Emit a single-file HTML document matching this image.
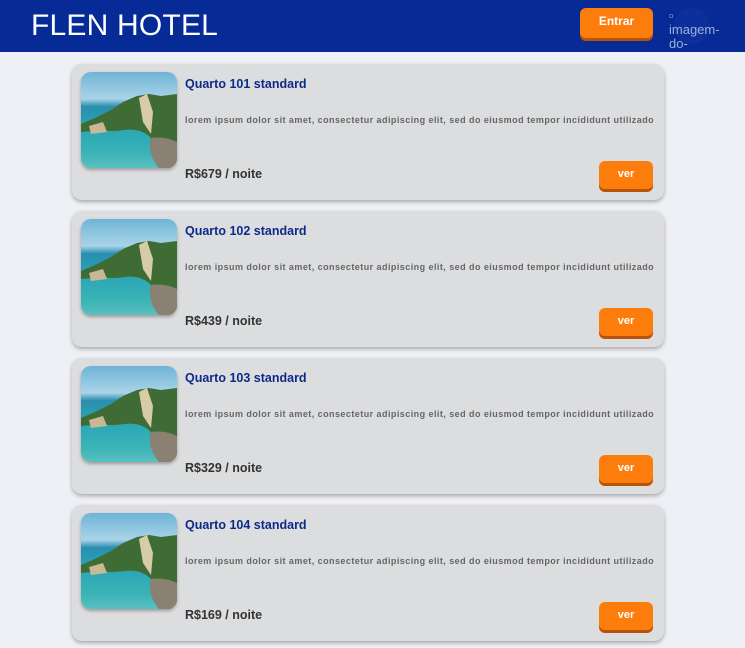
<!DOCTYPE html>
<html><head><meta charset="utf-8"><style>
*{margin:0;padding:0;box-sizing:border-box}
body{width:745px;height:648px;overflow:hidden;background:#eff0f5;font-family:"Liberation Sans",sans-serif;position:relative}
.hdr{position:absolute;left:0;top:0;width:745px;height:52px;background:#062a96}
.logo{position:absolute;left:31px;top:9px;color:#fff;font-size:30px;letter-spacing:0.2px}
.entrar{position:absolute;left:580px;top:8px;width:73px;height:30px;background:#fc7d0b;border-radius:6px;box-shadow:0 3px 0 #b8530a;color:#fff;font-weight:bold;font-size:12px;text-align:center;line-height:26px}
.avc{position:absolute;left:674px;top:8px;width:36px;height:36px;border-radius:50%;background:#0c2f9c}
.av{position:absolute;left:669px;top:9px;color:#9fb0d8;font-size:13px;line-height:14px}
.card{position:absolute;left:72px;width:592px;height:136px;background:#dcdddf;border-radius:10px;box-shadow:0 2px 4px rgba(0,0,0,.3)}
.img{position:absolute;left:9px;top:8px;width:96px;height:96px;border-radius:10px;overflow:hidden;box-shadow:0 2px 3px rgba(0,0,0,.3);
background:linear-gradient(180deg,#6fb4d6 0%,#a9d4e8 28%,#2a8fb0 36%,#2aa7b5 60%,#3bb3b7 85%,#5cc0c0 100%)}
.cliff{position:absolute;left:0;top:0;width:96px;height:96px}
.t{position:absolute;left:113px;top:13px;color:#0d2a8a;font-weight:bold;font-size:12.5px}
.d{position:absolute;left:113px;top:51px;color:#666;font-weight:bold;font-size:9px;letter-spacing:0.45px;white-space:nowrap}
.p{position:absolute;left:113px;top:103px;color:#333;font-weight:bold;font-size:12.5px}
.ver{position:absolute;left:527px;top:97px;width:54px;height:28px;background:#fc7d0b;border-radius:6px;box-shadow:0 3px 0 #b8530a;color:#fff;font-weight:bold;font-size:11px;text-align:center;line-height:26px}
</style></head><body>
<div class="hdr"><div class="logo">FLEN HOTEL</div><div class="entrar">Entrar</div><div class="avc"></div><div class="av">▫<br>imagem-<br>do-</div></div>

<div class="card" style="top:64px"><div class="img"><svg class="cliff" viewBox="0 0 96 96"><path d="M0 52 L14 46 L30 38 L42 30 L56 24 L68 22 L80 24 L96 22 L96 96 L78 96 Q66 80 70 66 Q60 56 44 58 Q30 60 20 58 L0 60Z" fill="#3f6b34"/><path d="M58 26 L66 22 L72 40 L70 62 L62 50Z" fill="#d8cba8"/><path d="M8 54 L22 50 L26 60 L10 62Z" fill="#c9b893"/><path d="M70 66 Q66 82 78 96 L96 96 L96 70 Q84 64 70 66Z" fill="#8a8173"/></svg></div><div class="t">Quarto 101 standard</div><div class="d">lorem ipsum dolor sit amet, consectetur adipiscing elit, sed do eiusmod tempor incididunt utilizado</div><div class="p">R$679 / noite</div><div class="ver">ver</div></div>

<div class="card" style="top:211px"><div class="img"><svg class="cliff" viewBox="0 0 96 96"><path d="M0 52 L14 46 L30 38 L42 30 L56 24 L68 22 L80 24 L96 22 L96 96 L78 96 Q66 80 70 66 Q60 56 44 58 Q30 60 20 58 L0 60Z" fill="#3f6b34"/><path d="M58 26 L66 22 L72 40 L70 62 L62 50Z" fill="#d8cba8"/><path d="M8 54 L22 50 L26 60 L10 62Z" fill="#c9b893"/><path d="M70 66 Q66 82 78 96 L96 96 L96 70 Q84 64 70 66Z" fill="#8a8173"/></svg></div><div class="t">Quarto 102 standard</div><div class="d">lorem ipsum dolor sit amet, consectetur adipiscing elit, sed do eiusmod tempor incididunt utilizado</div><div class="p">R$439 / noite</div><div class="ver">ver</div></div>

<div class="card" style="top:358px"><div class="img"><svg class="cliff" viewBox="0 0 96 96"><path d="M0 52 L14 46 L30 38 L42 30 L56 24 L68 22 L80 24 L96 22 L96 96 L78 96 Q66 80 70 66 Q60 56 44 58 Q30 60 20 58 L0 60Z" fill="#3f6b34"/><path d="M58 26 L66 22 L72 40 L70 62 L62 50Z" fill="#d8cba8"/><path d="M8 54 L22 50 L26 60 L10 62Z" fill="#c9b893"/><path d="M70 66 Q66 82 78 96 L96 96 L96 70 Q84 64 70 66Z" fill="#8a8173"/></svg></div><div class="t">Quarto 103 standard</div><div class="d">lorem ipsum dolor sit amet, consectetur adipiscing elit, sed do eiusmod tempor incididunt utilizado</div><div class="p">R$329 / noite</div><div class="ver">ver</div></div>

<div class="card" style="top:505px"><div class="img"><svg class="cliff" viewBox="0 0 96 96"><path d="M0 52 L14 46 L30 38 L42 30 L56 24 L68 22 L80 24 L96 22 L96 96 L78 96 Q66 80 70 66 Q60 56 44 58 Q30 60 20 58 L0 60Z" fill="#3f6b34"/><path d="M58 26 L66 22 L72 40 L70 62 L62 50Z" fill="#d8cba8"/><path d="M8 54 L22 50 L26 60 L10 62Z" fill="#c9b893"/><path d="M70 66 Q66 82 78 96 L96 96 L96 70 Q84 64 70 66Z" fill="#8a8173"/></svg></div><div class="t">Quarto 104 standard</div><div class="d">lorem ipsum dolor sit amet, consectetur adipiscing elit, sed do eiusmod tempor incididunt utilizado</div><div class="p">R$169 / noite</div><div class="ver">ver</div></div>
</body></html>
